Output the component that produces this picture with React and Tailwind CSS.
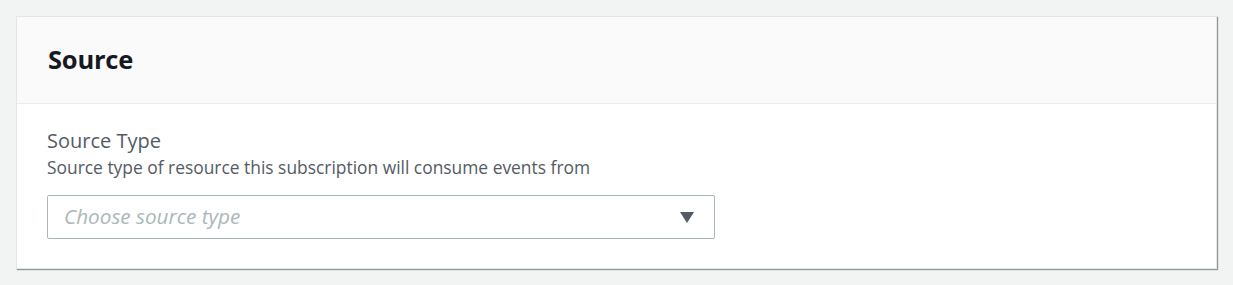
export default function App() {
  return (
    <div className="min-h-[285px] bg-[#f2f3f3] pt-4 pl-4 pr-4 pb-4" style={{ fontFamily: '"Open Sans", "Noto Sans", sans-serif' }}>
      <div className="w-[1201px] bg-white border border-[#e4e6e6] shadow-[1px_1px_1px_0_rgba(0,28,36,0.3),1px_1px_1px_0_rgba(0,28,36,0.15)]">
        <div className="h-[87px] bg-[#fafafa] border-b border-[#eaeded] flex items-center px-[31px]">
          <h2 className="text-[25.5px] font-bold text-[#16191f] leading-none tracking-[-0.2px]">Source</h2>
        </div>
        <div className="px-[30px] pt-[24px] pb-[29px]">
          <div className="text-[20px] text-[#545b64] leading-[26px]">Source Type</div>
          <div className="text-[17.4px] text-[#545b64] leading-[24px] mt-[1px]">
            Source type of resource this subscription will consume events from
          </div>
          <div className="mt-[16px] w-[668px] h-[44px] border border-[#aab7b8] rounded-[2px] flex items-center justify-between pl-[16px] pr-[20px]">
            <span className="italic text-[20.7px] text-[#aab7b8]">Choose source type</span>
            <svg width="14" height="11" viewBox="0 0 14 11">
              <path d="M0 0 H14 L7 11 Z" fill="#545b64" />
            </svg>
          </div>
        </div>
      </div>
    </div>
  );
}
